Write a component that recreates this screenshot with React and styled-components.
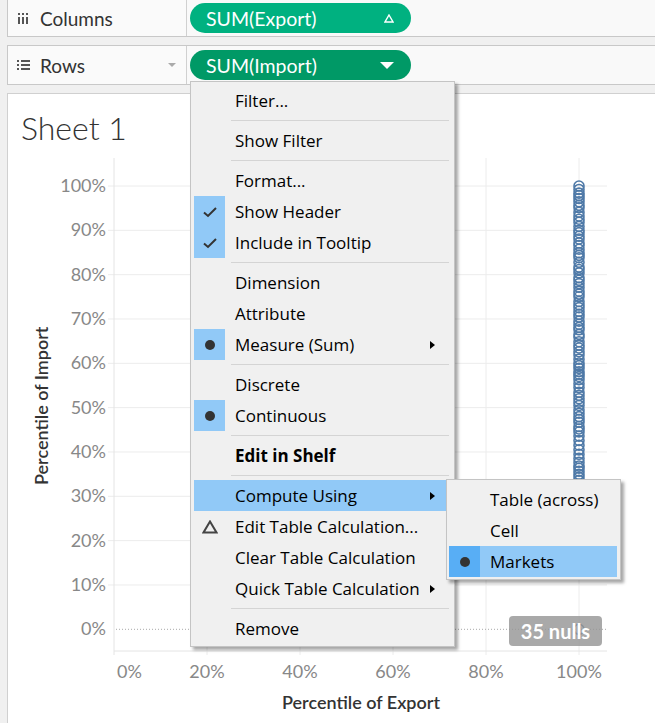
import styled, { createGlobalStyle } from 'styled-components';

const GlobalStyle = createGlobalStyle`
  body {
    margin: 0;
    background: #f0f0f0;
    overflow: hidden;
  }
`;

const menuItems = [
  { label: 'Filter...' },
  'sep',
  { label: 'Show Filter' },
  'sep',
  { label: 'Format...' },
  { label: 'Show Header', icon: 'check' },
  { label: 'Include in Tooltip', icon: 'check' },
  'sep',
  { label: 'Dimension' },
  { label: 'Attribute' },
  { label: 'Measure (Sum)', icon: 'dot', arrow: true },
  'sep',
  { label: 'Discrete' },
  { label: 'Continuous', icon: 'dot' },
  'sep',
  { label: 'Edit in Shelf', bold: true },
  'sep',
  { label: 'Compute Using', arrow: true, active: true },
  { label: 'Edit Table Calculation...', icon: 'delta' },
  { label: 'Clear Table Calculation' },
  { label: 'Quick Table Calculation', arrow: true },
  'sep',
  { label: 'Remove' },
];

const subItems = [
  { label: 'Table (across)' },
  { label: 'Cell' },
  { label: 'Markets', icon: 'dot', active: true },
];

// plot geometry, relative to the svg origin
const X0 = 64;
const XSTEP = 93;
const Y100 = 28;
const YSTEP = 44.33;
const yOf = (pct) => Y100 + (100 - pct) / 10 * YSTEP;

function markYs() {
  const ys = [];
  let y = Y100;
  let seed = 7;
  while (y < 335) {
    ys.push(y);
    seed = (seed * 9301 + 49297) % 233280;
    y += 2.2 + (seed / 233280) * 2.6;
  }
  return ys;
}

function MenuIcon({ type }) {
  if (type === 'check') {
    return (
      <svg width="16" height="12" viewBox="0 0 16 12">
        <path d="M2 6.5 L6 10 L14 2" fill="none" stroke="#333" strokeWidth="2" />
      </svg>
    );
  }
  if (type === 'dot') {
    return (
      <svg width="12" height="12" viewBox="0 0 12 12">
        <circle cx="6" cy="6" r="5" fill="#333" />
      </svg>
    );
  }
  if (type === 'delta') {
    return (
      <svg width="16" height="14" viewBox="0 0 16 14">
        <path d="M8 1.5 L14.5 12.5 L1.5 12.5 Z" fill="none" stroke="#444" strokeWidth="2" />
      </svg>
    );
  }
  return null;
}

function MenuList({ items, sub }) {
  return items.map((it, i) => {
    if (it === 'sep') return <Separator key={i} />;
    return (
      <Item key={i} $active={it.active} $sub={sub}>
        <IconCell $tone={it.icon === 'delta' || !it.icon ? 'none' : it.active ? 'strong' : 'light'}>
          <MenuIcon type={it.icon} />
        </IconCell>
        <ItemLabel $bold={it.bold}>{it.label}</ItemLabel>
        {it.arrow && <Arrow />}
      </Item>
    );
  });
}

function ColumnsIcon() {
  return (
    <svg width="12" height="11" viewBox="0 0 12 11">
      {[1, 5, 9].map((x) => (
        <g key={x} fill="#555">
          <rect x={x} y="0" width="2" height="2" />
          <rect x={x} y="4" width="2" height="7" />
        </g>
      ))}
    </svg>
  );
}

function RowsIcon() {
  return (
    <svg width="13" height="10" viewBox="0 0 13 10">
      {[0, 4, 8].map((y) => (
        <g key={y} fill="#555">
          <rect x="0" y={y} width="2" height="2" />
          <rect x="4" y={y} width="9" height="2" />
        </g>
      ))}
    </svg>
  );
}

function Chart() {
  const yTicks = [0, 10, 20, 30, 40, 50, 60, 70, 80, 90, 100];
  const xTicks = [0, 20, 40, 60, 80, 100];
  return (
    <svg width="605" height="532" viewBox="0 0 605 532">
      {yTicks.filter((t) => t > 0).map((t) => (
        <line key={t} x1="58" x2="557" y1={yOf(t)} y2={yOf(t)} stroke="#ececec" strokeWidth="1" />
      ))}
      {xTicks.filter((t) => t > 0).map((t) => {
        const x = X0 + (t / 20) * XSTEP;
        return <line key={t} x1={x} x2={x} y1="0" y2="497" stroke="#ececec" strokeWidth="1" />;
      })}
      <line x1={X0} x2={X0} y1="0" y2="497" stroke="#e4e4e4" strokeWidth="1" />
      <line x1={X0} x2="557" y1="493" y2="493" stroke="#e4e4e4" strokeWidth="1" />
      <line x1={X0 + 2} x2="557" y1={yOf(0)} y2={yOf(0)} stroke="#a8a8a8" strokeWidth="1" strokeDasharray="1 2" />
      <g fontFamily="Lato, 'Open Sans', sans-serif" fontSize="18" fill="#888">
        {yTicks.map((t) => (
          <text key={t} x="56" y={yOf(t) + 6} textAnchor="end">{t}%</text>
        ))}
        {xTicks.map((t) => (
          <text
            key={t}
            x={t === 0 ? 67 : X0 + (t / 20) * XSTEP}
            y="520"
            textAnchor={t === 0 ? 'start' : 'middle'}
          >
            {t}%
          </text>
        ))}
      </g>
      <g fill="none" stroke="#4e79a7" strokeWidth="1.6">
        {markYs().map((y, i) => (
          <circle key={i} cx="529" cy={y} r="5" />
        ))}
        <circle cx="529" cy={yOf(0)} r="5" />
      </g>
    </svg>
  );
}

export default function App() {
  return (
    <Page>
      <GlobalStyle />
      <Shelf $first>
        <ShelfLabel>
          <ShelfIcon><ColumnsIcon /></ShelfIcon>
          Columns
        </ShelfLabel>
        <ShelfBody>
          <Pill>
            SUM(Export)
            <svg width="10" height="9" viewBox="0 0 10 9">
              <path d="M5 1 L9 8 L1 8 Z" fill="none" stroke="#fff" strokeWidth="1.4" />
            </svg>
          </Pill>
        </ShelfBody>
      </Shelf>
      <Shelf>
        <ShelfLabel>
          <ShelfIcon><RowsIcon /></ShelfIcon>
          Rows
          <LabelCaret />
        </ShelfLabel>
        <ShelfBody>
          <Pill $selected>
            SUM(Import)
            <svg width="14" height="7" viewBox="0 0 14 7">
              <path d="M0 0 L14 0 L7 7 Z" fill="#fff" />
            </svg>
          </Pill>
        </ShelfBody>
      </Shelf>
      <SheetPanel>
        <SheetTitle>Sheet 1</SheetTitle>
        <ChartRow>
          <YTitleCell>
            <YTitle>Percentile of Import</YTitle>
          </YTitleCell>
          <Chart />
        </ChartRow>
        <XTitle>Percentile of Export</XTitle>
      </SheetPanel>
      <NullsBadge>35 nulls</NullsBadge>
      <Menu>
        <MenuList items={menuItems} />
      </Menu>
      <SubMenu>
        <MenuList items={subItems} sub />
      </SubMenu>
    </Page>
  );
}

const Page = styled.div`
  position: relative;
  width: 655px;
  height: 723px;
  overflow: hidden;
  background: #f0f0f0;
  font-family: Lato, 'Open Sans', sans-serif;
`;

const Shelf = styled.div`
  display: flex;
  height: ${(p) => (p.$first ? '36px' : '38px')};
  margin: ${(p) => (p.$first ? '-1px' : '8px')} -20px 0 7px;
  border: 1px solid #c8c8c8;
  background: #f9f9f9;
`;

const ShelfLabel = styled.div`
  position: relative;
  display: flex;
  align-items: center;
  width: 178px;
  border-right: 1px solid #d0d0d0;
  background: #fafafa;
  color: #333;
  font-size: 19px;
`;

const ShelfIcon = styled.span`
  display: flex;
  width: 22px;
  margin-left: 9px;
  margin-right: 1px;
`;

const LabelCaret = styled.span`
  position: absolute;
  right: 10px;
  top: 17px;
  border-left: 4px solid transparent;
  border-right: 4px solid transparent;
  border-top: 4px solid #aaa;
`;

const ShelfBody = styled.div`
  display: flex;
  align-items: center;
  padding-left: 3px;
  flex: 1;
`;

const Pill = styled.div`
  display: flex;
  align-items: center;
  justify-content: space-between;
  box-sizing: border-box;
  width: 221px;
  height: 30px;
  padding: 0 17px 0 16px;
  border-radius: 15px;
  background: ${(p) => (p.$selected ? '#009966' : '#00b180')};
  color: #fff;
  font-size: 19.5px;
`;

const SheetPanel = styled.div`
  display: flex;
  flex-direction: column;
  height: 700px;
  margin: 8px -20px 0 7px;
  border: 1px solid #d0d0d0;
  background: #fff;
`;

const SheetTitle = styled.div`
  height: 64px;
  box-sizing: border-box;
  padding: 14px 0 0 13px;
  font-size: 32px;
  font-weight: 300;
  line-height: 40px;
  color: #333;
`;

const ChartRow = styled.div`
  display: flex;
`;

const YTitleCell = styled.div`
  display: flex;
  justify-content: flex-end;
  width: 42px;
  height: 495px;
`;

const YTitle = styled.div`
  display: flex;
  align-items: center;
  justify-content: center;
  width: 18px;
  writing-mode: vertical-rl;
  transform: rotate(180deg);
  font-size: 18px;
  font-weight: 600;
  color: #333;
`;

const XTitle = styled.div`
  width: 494px;
  margin-left: 106px;
  text-align: center;
  line-height: 25px;
  font-size: 18px;
  font-weight: 600;
  color: #333;
`;

const NullsBadge = styled.div`
  position: absolute;
  left: 509px;
  top: 616px;
  display: flex;
  align-items: center;
  justify-content: center;
  width: 93px;
  height: 30px;
  border-radius: 4px;
  background: rgba(150, 150, 150, 0.82);
  color: #fff;
  font-size: 20px;
  font-weight: 700;
`;

const Menu = styled.div`
  position: absolute;
  left: 190px;
  top: 81px;
  width: 265px;
  box-sizing: border-box;
  padding: 3px 0 2px;
  border: 1px solid #c4c4c4;
  background: #f0f0f0;
  box-shadow: 3px 3px 3px rgba(0, 0, 0, 0.35);
  font-family: 'Open Sans', 'Noto Sans', sans-serif;
`;

const SubMenu = styled(Menu)`
  left: 446px;
  top: 479px;
  width: 175px;
  padding: 4px 0 2px;
`;

const Item = styled.div`
  display: flex;
  align-items: center;
  height: 31px;
  margin: ${(p) => (p.$sub ? '0 3px 0 2px' : '0 3px')};
  background: ${(p) => (p.$active ? '#91c9f7' : 'transparent')};
`;

const IconCell = styled.div`
  display: flex;
  align-items: center;
  justify-content: center;
  width: 31px;
  height: 31px;
  margin-right: 10px;
  background: ${(p) => (p.$tone === 'strong' ? '#58aef5' : p.$tone === 'light' ? '#91c9f7' : 'transparent')};
`;

const ItemLabel = styled.span`
  flex: 1;
  font-size: 17px;
  font-weight: ${(p) => (p.$bold ? 700 : 400)};
  color: #000;
  white-space: nowrap;
`;

const Arrow = styled.span`
  margin-right: 16px;
  border-top: 4px solid transparent;
  border-bottom: 4px solid transparent;
  border-left: 5px solid #000;
`;

const Separator = styled.div`
  height: 1px;
  margin: 4px 5px 4px 40px;
  background: #d4d4d4;
`;
